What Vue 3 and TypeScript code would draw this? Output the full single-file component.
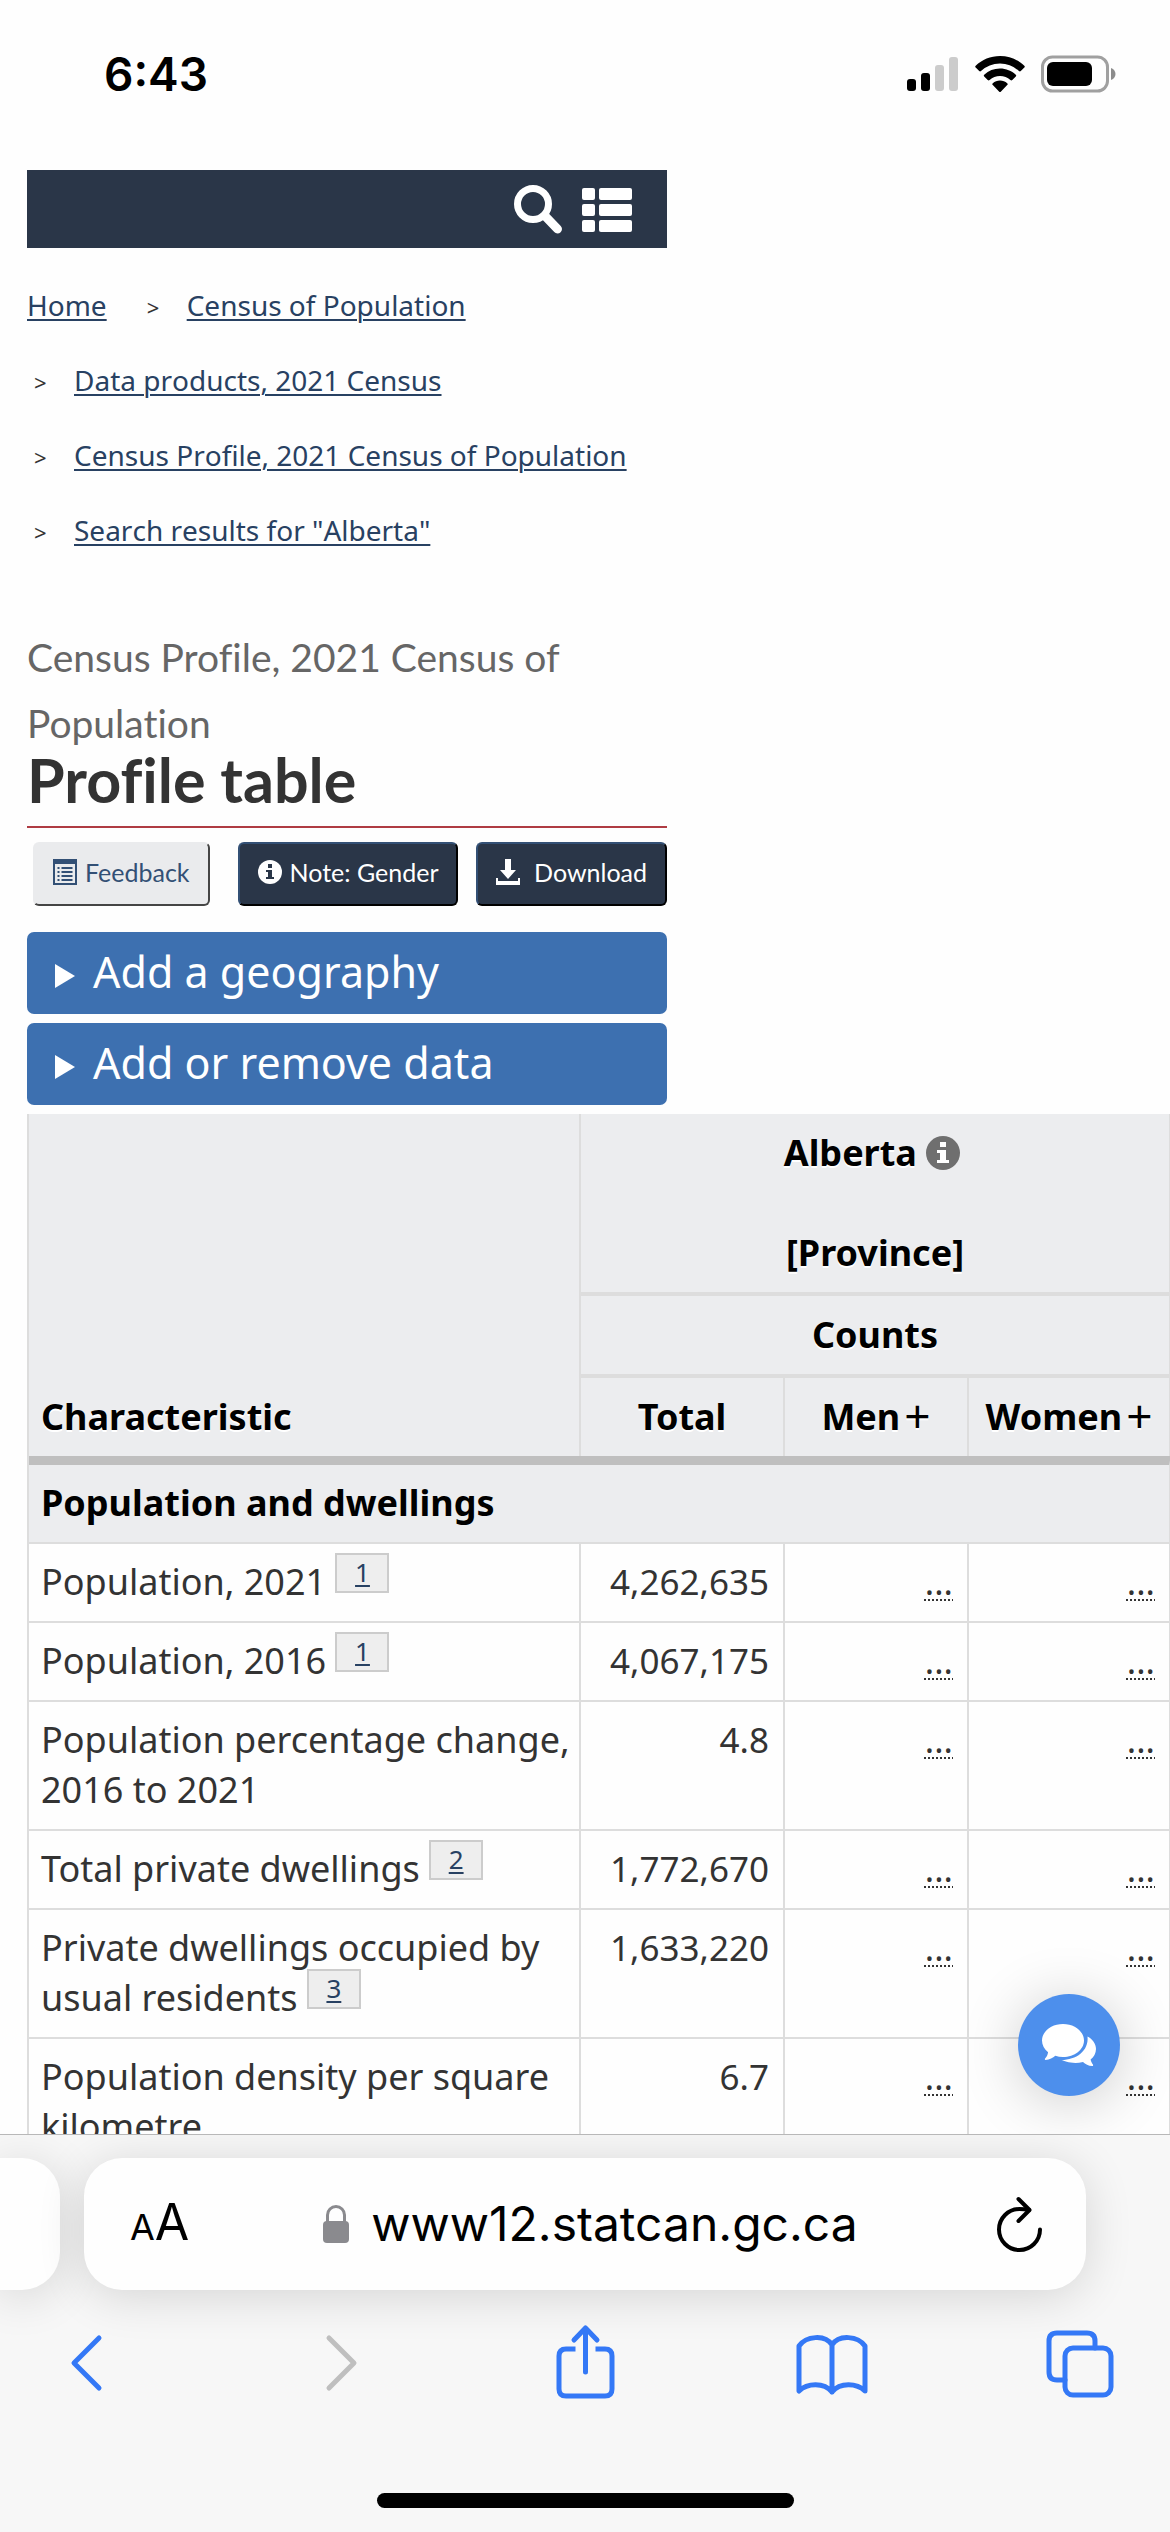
<script setup lang="ts">
import { ref } from 'vue'

interface Row {
  label: string
  note?: number
  total: string
}

const crumbs: string[] = [
  'Home',
  'Census of Population',
  'Data products, 2021 Census',
  'Census Profile, 2021 Census of Population',
  'Search results for "Alberta"',
]

const panels: string[] = ['Add a geography', 'Add or remove data']

const rows: Row[] = [
  { label: 'Population, 2021', note: 1, total: '4,262,635' },
  { label: 'Population, 2016', note: 1, total: '4,067,175' },
  { label: 'Population percentage change, 2016 to 2021', total: '4.8' },
  { label: 'Total private dwellings', note: 2, total: '1,772,670' },
  { label: 'Private dwellings occupied by usual residents', note: 3, total: '1,633,220' },
  { label: 'Population density per square kilometre', total: '6.7' },
]

const address = ref('www12.statcan.gc.ca')
</script>

<template>
  <div class="screen">
    <header class="status">
      <span class="clock">6:43</span>
      <div class="indicators">
        <svg width="52" height="36" viewBox="0 0 52 36" aria-label="Signal">
          <rect x="0" y="23" width="9" height="12" rx="3" />
          <rect x="14" y="17" width="9" height="18" rx="3" />
          <rect x="28" y="9" width="9" height="26" rx="3" fill="#ccc" />
          <rect x="42" y="1" width="9" height="34" rx="3" fill="#ccc" />
        </svg>
        <svg width="50" height="36" viewBox="0 0 50 36" aria-label="Wi-Fi">
          <path d="M25 0C34.500 0 43 3.700 49.300 9.700a1.300 1.300 0 0 1 0 1.900l-3.500 3.500a1.300 1.300 0 0 1-1.800 0A27.500 27.500 0 0 0 25 7.500 27.500 27.500 0 0 0 6 15.100a1.300 1.300 0 0 1-1.800 0L.7 11.600a1.300 1.300 0 0 1 0-1.900C7 3.700 15.500 0 25 0z" />
          <path d="M25 12.500c6 0 11.600 2.300 15.800 6.200a1.300 1.300 0 0 1 0 1.900l-3.500 3.500a1.400 1.400 0 0 1-1.900 0A15.500 15.500 0 0 0 25 20a15.500 15.500 0 0 0-10.400 4.100 1.400 1.400 0 0 1-1.900 0l-3.500-3.500a1.300 1.300 0 0 1 0-1.900A23 23 0 0 1 25 12.500z" />
          <path d="M25 24.500c2.800 0 5.300 1 7.200 2.700a1.300 1.300 0 0 1 0 1.900l-6.200 6.300a1.400 1.400 0 0 1-2 0l-6.200-6.300a1.300 1.300 0 0 1 0-1.900c1.900-1.700 4.400-2.700 7.200-2.700z" />
        </svg>
        <svg width="75" height="38" viewBox="0 0 75 38" aria-label="Battery">
          <rect x="1.500" y="2" width="65" height="34" rx="10" fill="none" stroke="#a0a0a0" stroke-width="3" />
          <rect x="6" y="7" width="45" height="24" rx="6" />
          <path d="M70 13c3 1 4.500 3.500 4.500 6s-1.500 5-4.500 6z" fill="#8c8c8c" />
        </svg>
      </div>
    </header>

    <main class="page">
      <div class="column">
        <div class="siteBar">
          <button type="button" aria-label="Search">
            <svg width="48" height="50" viewBox="0 0 48 50">
              <circle cx="19" cy="20" r="15.500" fill="none" stroke="#fff" stroke-width="7" />
              <path d="M32 33l11.500 12" stroke="#fff" stroke-width="9" stroke-linecap="round" />
            </svg>
          </button>
          <button type="button" aria-label="Menu">
            <svg width="50" height="50" viewBox="0 0 50 50" fill="#fff">
              <rect x="0" y="4" width="13" height="12" rx="2" />
              <rect x="17" y="4" width="33" height="12" rx="2" />
              <rect x="0" y="20" width="13" height="12" rx="2" />
              <rect x="17" y="20" width="33" height="12" rx="2" />
              <rect x="0" y="36" width="13" height="12" rx="2" />
              <rect x="17" y="36" width="33" height="12" rx="2" />
            </svg>
          </button>
        </div>

        <nav aria-label="Breadcrumb">
          <ol class="crumbs">
            <li v-for="crumb in crumbs" :key="crumb"><a href="#">{{ crumb }}</a></li>
          </ol>
        </nav>

        <h1 class="title">
          <small>Census Profile, 2021 Census of Population</small>
          <span>Profile table</span>
        </h1>

        <div class="actions">
          <button type="button" class="action light">
            <svg width="24" height="26" viewBox="0 0 24 26">
              <path d="M0 0h24v26H0zM2 5v19h20V5z" fill="currentColor" fill-rule="evenodd" />
              <path d="M4.500 9h2M4.500 13h2M4.500 17h2M4.500 21h2M8.500 9h11M8.500 13h11M8.500 17h11M8.500 21h11" stroke="currentColor" stroke-width="2" />
            </svg>
            Feedback
          </button>
          <button type="button" class="action dark">
            <svg width="24" height="24" viewBox="0 0 24 24">
              <circle cx="12" cy="12" r="12" fill="#fff" />
              <path d="M10 4h4v4h-4zM8 10h6v7h2v2H8v-2h2v-5H8z" fill="#2a3648" />
            </svg>
            Note: Gender
          </button>
          <button type="button" class="action dark download">
            <svg width="24" height="26" viewBox="0 0 24 26" fill="#fff">
              <path d="M9 0h6v11h5l-8 9-8-9h5z" />
              <path d="M0 19h2v3h20v-3h2v7H0z" />
            </svg>
            Download
          </button>
        </div>

        <details v-for="panel in panels" :key="panel" class="panel">
          <summary>{{ panel }}</summary>
        </details>
      </div>

      <table class="profile">
        <colgroup>
          <col class="colName" />
          <col class="colTotal" />
          <col class="colMen" />
          <col />
        </colgroup>
        <thead>
          <tr>
            <th rowspan="3" scope="col" class="name">Characteristic</th>
            <th colspan="3" scope="colgroup" class="rule">
              Alberta
              <svg class="info" width="34" height="34" viewBox="0 0 34 34" aria-label="Information">
                <circle cx="17" cy="17" r="17" fill="#6f6f6f" />
                <path d="M14 6h6v5h-6zM11 14h9v10h3v3H11v-3h3v-7h-3z" fill="#fff" />
              </svg>
              <br /><br />[Province]
            </th>
          </tr>
          <tr>
            <th colspan="3" scope="colgroup" class="rule">Counts</th>
          </tr>
          <tr>
            <th scope="col">Total</th>
            <th scope="col">Men<span class="plus">+</span></th>
            <th scope="col">Women<span class="plus">+</span></th>
          </tr>
        </thead>
        <tbody>
          <tr>
            <th colspan="4" scope="rowgroup" class="group">Population and dwellings</th>
          </tr>
          <tr v-for="row in rows" :key="row.label">
            <td class="label">
              {{ row.label }}
              <a v-if="row.note" href="#" class="note">{{ row.note }}</a>
            </td>
            <td class="num">{{ row.total }}</td>
            <td class="num"><abbr title="not applicable">...</abbr></td>
            <td class="num"><abbr title="not applicable">...</abbr></td>
          </tr>
        </tbody>
      </table>

      <button type="button" class="chat" aria-label="Chat">
        <svg width="54" height="42" viewBox="0 0 54 42" fill="#fff">
          <path d="M21 0c11.600 0 21 7.400 21 16.500S32.600 33 21 33c-2.700 0-5.300-.4-7.700-1.200C11 33.600 7.500 36 3.600 36c-.8 0-1-.8-.5-1.400 1.400-1.500 2.500-3.500 3-6.300C2.300 25.300 0 21.100 0 16.500 0 7.400 9.400 0 21 0z" />
          <path d="M45.500 12.500c5 2.700 8.500 7.200 8.500 12.500 0 4.300-2.200 8-5.400 10.500.4 2 1.400 3.800 2.300 4.900.5.700.2 1.600-.6 1.600-3.900 0-7-2-9.300-4C30.500 40.500 22.500 37 19.500 36 34 36 47 27 45.500 12.500z" />
        </svg>
      </button>
    </main>

    <footer class="browser">
      <div class="tabs">
        <div class="pill previous"></div>
        <div class="pill current">
          <button type="button" class="textSize" aria-label="Text size"><small>A</small>A</button>
          <div class="address">
            <svg width="26" height="38" viewBox="0 0 26 38" aria-hidden="true">
              <rect x="0" y="16" width="26" height="22" rx="4" fill="#8a8a8e" />
              <path d="M4.500 18v-8a8.500 8.500 0 0 1 17 0v8" fill="none" stroke="#8a8a8e" stroke-width="3" />
            </svg>
            <input v-model="address" type="text" aria-label="Address" />
          </div>
          <button type="button" aria-label="Reload">
            <svg width="46" height="56" viewBox="0 0 46 56" fill="none" stroke="#000" stroke-width="4" stroke-linecap="round" stroke-linejoin="round">
              <path d="M43 33.500A20.500 20.500 0 1 1 22.500 13c3 0 6 .3 9.500 1" />
              <path d="M21.500 3l11 11-11 11" />
            </svg>
          </button>
        </div>
      </div>
      <nav class="tools" aria-label="Browser">
        <button type="button" aria-label="Back">
          <svg viewBox="0 0 72 76"><path d="M49 15L24 40l25 25" /></svg>
        </button>
        <button type="button" aria-label="Forward" disabled>
          <svg viewBox="0 0 72 76"><path d="M30 15l25 25-25 25" /></svg>
        </button>
        <button type="button" aria-label="Share">
          <svg viewBox="0 0 72 76">
            <path d="M28.500 26H19q-7 0-7 7v33q0 7 7 7h39q7 0 7-7V33q0-7-7-7h-9.500" stroke-linecap="butt" />
            <path d="M38.500 49V6M27 17L38.500 5 50 17" />
          </svg>
        </button>
        <button type="button" aria-label="Bookmarks">
          <svg viewBox="0 0 72 76">
            <path d="M3 68V23c7-10 26-12 33-1 7-11 26-9 33 1v45c-8-8-25-9-33 1-8-10-25-9-33-1zM36 22v47" />
          </svg>
        </button>
        <button type="button" aria-label="Tabs">
          <svg viewBox="0 0 72 76">
            <rect x="21" y="25" width="46" height="47" rx="8" />
            <path d="M51 25v-7q0-8-8-8H13q-8 0-8 8v31q0 8 8 8h8" />
          </svg>
        </button>
      </nav>
      <div class="homeBar"></div>
    </footer>
  </div>
</template>

<style>
body {
  margin: 0;
  background: #fff;
}
</style>

<style scoped>
.screen {
  display: flex;
  flex-direction: column;
  height: 100vh;
  overflow: hidden;
  background: #fefefe;
  color: #333;
  font-family: 'Noto Sans', sans-serif;
  font-size: 36px;
  line-height: 50px;
}

button {
  padding: 0;
  border: 0;
  background: none;
  color: inherit;
  font: inherit;
}

svg {
  display: block;
  flex: none;
}

.status {
  display: flex;
  flex: none;
  align-items: center;
  justify-content: space-between;
  padding: 49px 54px 71px 104px;
  color: #000;
  font-family: Inter, sans-serif;
}

.clock {
  font-size: 46px;
  font-weight: 600;
}

.indicators {
  display: flex;
  align-items: center;
  gap: 16px;
}

.page {
  position: relative;
  flex: 1;
  min-height: 0;
  overflow: hidden;
}

.column {
  max-width: 640px;
  margin-left: 27px;
}

.siteBar {
  display: flex;
  justify-content: flex-end;
  gap: 20px;
  padding: 14px 35px 14px 0;
  background: #2a3648;
}

.crumbs {
  display: flex;
  flex-wrap: wrap;
  margin: 0;
  padding: 20px 0 0;
  list-style: none;
  font-size: 28px;
  font-kerning: none;
  line-height: 75px;
}

.crumbs li {
  padding-left: 7px;
  white-space: nowrap;
}

.crumbs li:first-child {
  padding: 0 33px 0 0;
}

.crumbs li + li::before {
  content: '>';
  display: inline-block;
  width: 40px;
  font-size: 22px;
  line-height: 22px;
}

a {
  color: #284162;
  text-decoration: underline;
  text-decoration-thickness: 2px;
  text-underline-offset: 3px;
}

.title {
  display: flex;
  flex-direction: column;
  margin: 56px 0 0;
  padding-bottom: 22px;
  border-bottom: 2px solid #af3c43;
  font-family: Lato, sans-serif;
  font-size: 61px;
  font-variant-ligatures: none;
  font-weight: 700;
  line-height: 48px;
}

.title small {
  color: #666;
  font-size: 39px;
  font-weight: 400;
  line-height: 66px;
}

.actions {
  display: flex;
  margin-bottom: 26px;
  padding: 14px 0 0 6px;
}

.action {
  display: flex;
  align-items: center;
  gap: 8px;
  box-sizing: border-box;
  height: 64px;
  padding: 0 18px 4px;
  border: 2px outset #335075;
  border-radius: 6px;
  font-family: Lato, sans-serif;
  font-size: 25px;
  white-space: nowrap;
}

.light {
  border-color: #eaebed #999 #999 #eaebed;
  background: #eaebed;
  color: #335075;
}

.dark {
  margin-left: 28px;
  border-color: #335075 #0c1016 #0c1016 #335075;
  background: #2a3648;
  color: #fff;
}

.download {
  gap: 14px;
  margin-left: auto;
}

.panel {
  margin-bottom: 9px;
}

.panel summary {
  display: flex;
  align-items: baseline;
  gap: 18px;
  padding: 15px 28px 17px;
  border-radius: 7px;
  background: #3d70b0;
  color: #fff;
  font-size: 43px;
  list-style: none;
}

.panel summary::before {
  content: '';
  border: solid transparent;
  border-width: 12px 0 12px 20px;
  border-left-color: #fff;
}

.profile {
  width: calc(100% - 26px);
  margin-left: 27px;
  border-left: 2px solid #ddd;
  border-spacing: 0;
  table-layout: fixed;
}

.colName {
  width: 552px;
}

.colTotal {
  width: 204px;
}

.colMen {
  width: 184px;
}

th,
td {
  padding: 13px 14px 14px;
  border-right: 2px solid #ddd;
  vertical-align: top;
}

td {
  border-bottom: 2px solid #ddd;
}

.label {
  padding-right: 4px;
  padding-left: 12px;
}

th {
  background: #ecedef;
  color: #000;
  text-align: center;
  text-shadow: 0 2px 0 #fff;
}

thead th {
  padding: 14px 8px;
}

thead .rule {
  border-bottom: 4px solid #ddd;
}

thead .name {
  padding-left: 12px;
  text-align: left;
  vertical-align: bottom;
}

.group {
  padding-left: 12px;
  border-top: 9px solid #bfbfbf;
  border-bottom: 2px solid #ddd;
  text-align: left;
  text-shadow: none;
}

.info {
  display: inline-block;
  margin-right: 6px;
  vertical-align: -4px;
}

.plus {
  margin-left: 4px;
  font-size: 46px;
  font-weight: 400;
  line-height: 0;
  vertical-align: -3px;
}

.num {
  font-size: 35px;
  text-align: right;
}

abbr {
  text-decoration: underline dotted 2px;
  text-decoration-skip-ink: none;
  text-underline-offset: 4px;
}

.note {
  display: inline-block;
  box-sizing: border-box;
  width: 54px;
  height: 40px;
  margin-top: -8px;
  border: 2px solid #ccc;
  background: #eee;
  font-size: 26px;
  line-height: 34px;
  text-align: center;
  vertical-align: 13px;
}

.chat {
  position: absolute;
  right: 50px;
  bottom: 38px;
  display: flex;
  align-items: center;
  justify-content: center;
  width: 102px;
  height: 102px;
  border-radius: 50%;
  background: #4d8fec;
  box-shadow: 0 6px 60px rgba(0, 0, 0, 0.2);
}

.browser {
  flex: none;
  overflow: hidden;
  border-top: 1px solid #b8b8b8;
  background: #f7f7f7;
  font-family: Inter, sans-serif;
}

.tabs {
  display: flex;
  gap: 24px;
  margin-right: 84px;
  padding-top: 23px;
}

.pill {
  height: 132px;
  border-radius: 38px;
  background: #fefefe;
  box-shadow: 0 6px 48px rgba(0, 0, 0, 0.14);
}

.previous {
  flex: none;
  width: 60px;
  border-top-left-radius: 0;
  border-bottom-left-radius: 0;
}

.current {
  display: flex;
  flex: 1;
  align-items: center;
  justify-content: space-between;
  box-sizing: border-box;
  padding: 0 43px 0 46px;
  color: #000;
  font-size: 50px;
}

.textSize small {
  font-size: 36px;
}

.address {
  display: flex;
  align-items: center;
  gap: 22px;
  font-size: 48px;
}

.address input {
  width: 492px;
  height: 70px;
  padding: 0;
  border: 0;
  background: none;
  color: inherit;
  font: inherit;
  line-height: 70px;
}

.tools {
  display: flex;
  justify-content: space-between;
  padding: 33px 54px 0 50px;
  color: #3478f6;
}

.tools svg {
  width: 72px;
  height: 76px;
  fill: none;
  stroke: currentColor;
  stroke-width: 5;
  stroke-linecap: round;
  stroke-linejoin: round;
}

.tools button:disabled {
  color: #bfbfbf;
}

.homeBar {
  width: 417px;
  height: 15px;
  margin: 94px auto 24px;
  border-radius: 8px;
  background: #000;
}
</style>
